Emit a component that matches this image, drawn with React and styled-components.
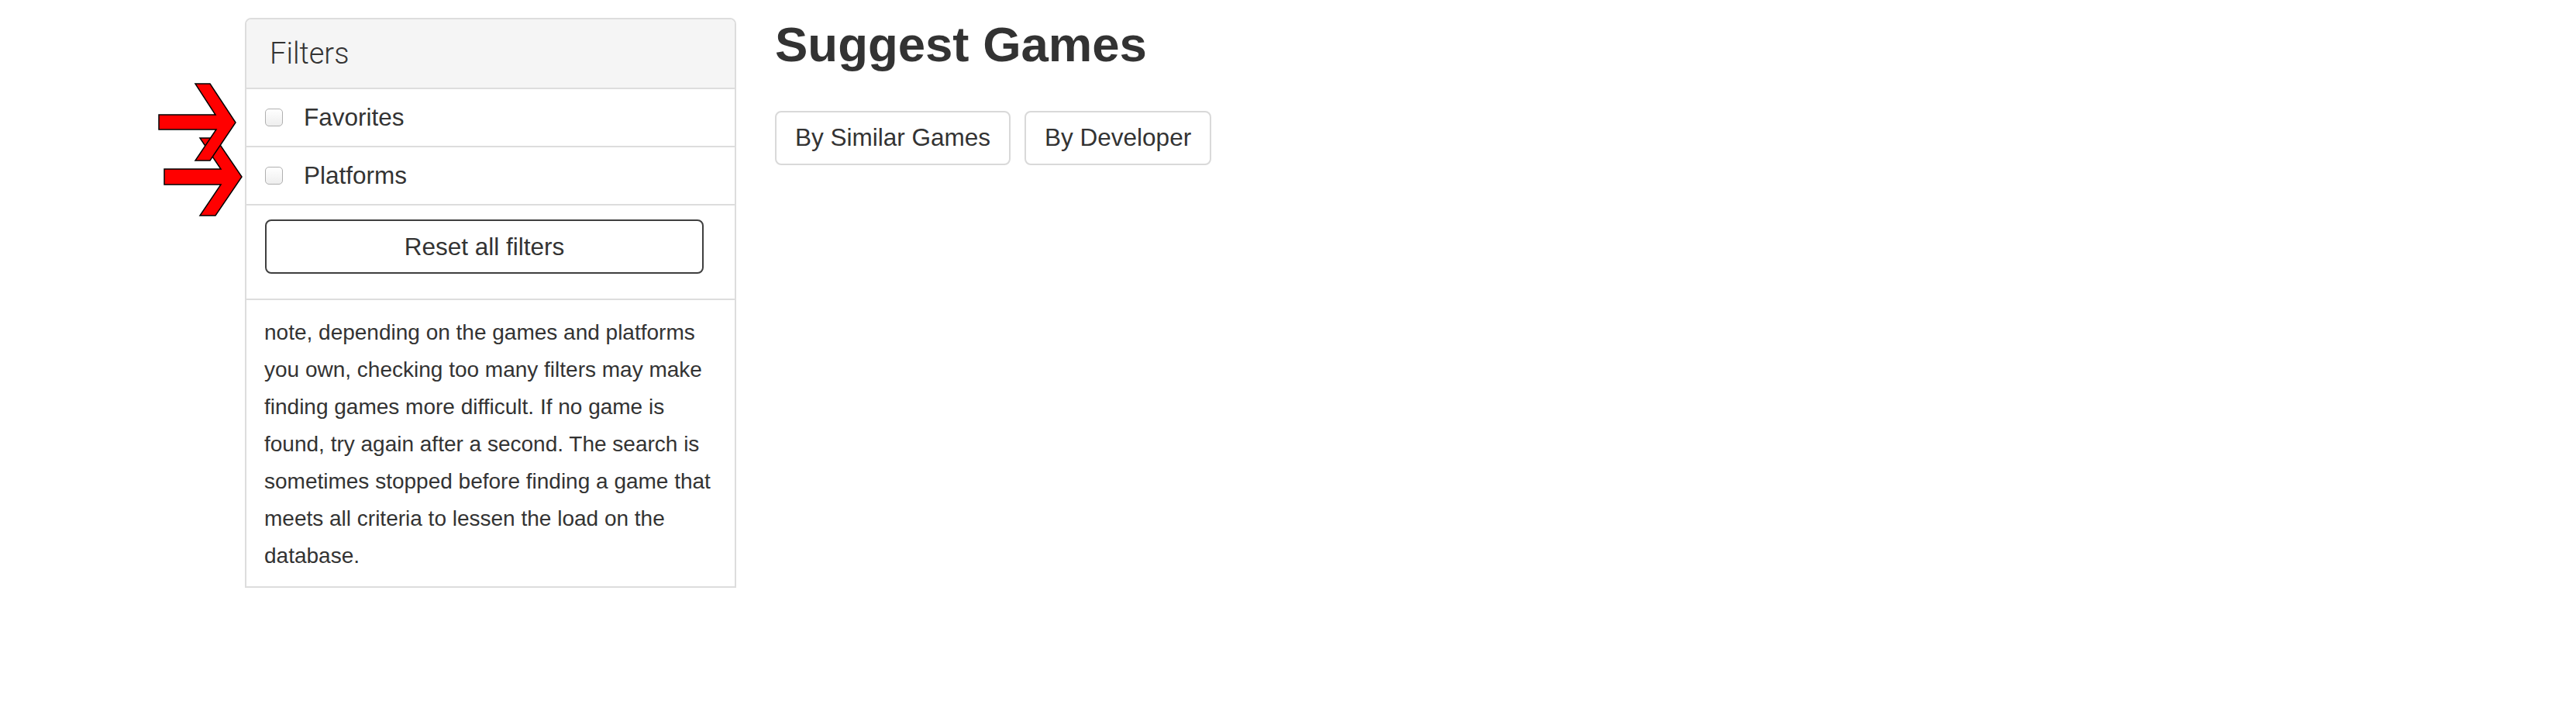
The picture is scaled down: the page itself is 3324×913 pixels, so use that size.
import React from 'react';
import styled, { createGlobalStyle } from 'styled-components';

const GlobalStyle = createGlobalStyle`
    body {
        margin: 0;
        background: #fff;
        color: #333;
        font-family: "Liberation Sans", Arial, Helvetica, sans-serif;
    }
`;

const Page = styled.div`
    position: relative;
    display: flex;
    align-items: flex-start;
    gap: 50px;
    padding: 23px 0 0 316px;
    min-height: 913px;
    box-sizing: border-box;
`;

// red annotation arrows drawn over the page
const Arrows = styled.svg`
    position: absolute;
    left: 0;
    top: 0;
    pointer-events: none;
`;

const Panel = styled.div`
    width: 634px;
    box-sizing: border-box;
    border: 2px solid #ddd;
    border-radius: 8px 8px 0 0;
    background: #fff;
`;

const PanelHeader = styled.div`
    display: flex;
    align-items: center;
    height: 88px;
    padding: 0 30px;
    background: #f5f5f5;
    border-bottom: 2px solid #ddd;
    border-radius: 6px 6px 0 0;
    font-family: Roboto, "Liberation Sans", sans-serif;
    font-size: 38px;
    font-weight: 300;
    color: #333;
`;

const FilterRow = styled.label`
    display: flex;
    align-items: center;
    gap: 27px;
    height: 73px;
    padding: 0 24px;
    border-bottom: 2px solid #ddd;
    font-size: 31.5px;
    color: #333;
`;

const Check = styled.input`
    appearance: none;
    margin: 0;
    width: 23px;
    height: 23px;
    border: 1.5px solid #b0b0b0;
    border-radius: 5px;
    background: linear-gradient(#fff, #eee);
    box-sizing: border-box;
`;

const ResetArea = styled.div`
    padding: 18px 40px 32px 24px;
    border-bottom: 2px solid #ddd;
`;

const ResetButton = styled.button`
    display: block;
    width: 100%;
    height: 70px;
    border: 2px solid #3f3f3f;
    border-radius: 8px;
    background: #fff;
    font-family: inherit;
    font-size: 31.5px;
    color: #333;
`;

const Note = styled.p`
    margin: 0;
    padding: 18px 22px 15px 23px;
    font-size: 28px;
    line-height: 48px;
    color: #333;
`;

const Main = styled.div`
    display: flex;
    flex-direction: column;
`;

const Title = styled.h1`
    margin: 0;
    font-size: 63.5px;
    font-weight: bold;
    line-height: 1.1;
    color: #333;
`;

const ButtonRow = styled.div`
    display: flex;
    gap: 18px;
    margin-top: 50px;
`;

const ModeButton = styled.button`
    height: 70px;
    padding: 0 24px;
    border: 2px solid #d9d9d9;
    border-radius: 8px;
    background: #fff;
    font-family: inherit;
    font-size: 31.5px;
    color: #333;
`;

const filters = ['Favorites', 'Platforms'];

const App = () => {
    return (
        <>
            <GlobalStyle />
            <Page>
                <Panel>
                    <PanelHeader>Filters</PanelHeader>
                    {filters.map(name => (
                        <FilterRow key={name}>
                            <Check type='checkbox' />
                            {name}
                        </FilterRow>
                    ))}
                    <ResetArea>
                        <ResetButton>Reset all filters</ResetButton>
                    </ResetArea>
                    <Note>
                        note, depending on the games and platforms you own, checking too many filters may make
                        finding games more difficult. If no game is found, try again after a second. The search
                        is sometimes stopped before finding a game that meets all criteria to lessen the load on
                        the database.
                    </Note>
                </Panel>
                <Main>
                    <Title>Suggest Games</Title>
                    <ButtonRow>
                        <ModeButton>By Similar Games</ModeButton>
                        <ModeButton>By Developer</ModeButton>
                    </ButtonRow>
                </Main>
                <Arrows width='330' height='300' viewBox='0 0 330 300'>
                    <polygon
                        points='212,218 285,218 258,178 278,178 312,228 278,278 258,278 285,238 212,238'
                        fill='#ff0000' stroke='#000' strokeWidth='1.5' strokeLinejoin='miter' />
                    <polygon
                        points='205,148 278,148 252,108 271,108 304,158 271,207 252,207 279,167 205,167'
                        fill='#ff0000' stroke='#000' strokeWidth='1.5' strokeLinejoin='miter' />
                </Arrows>
            </Page>
        </>
    );
};

export default App;
